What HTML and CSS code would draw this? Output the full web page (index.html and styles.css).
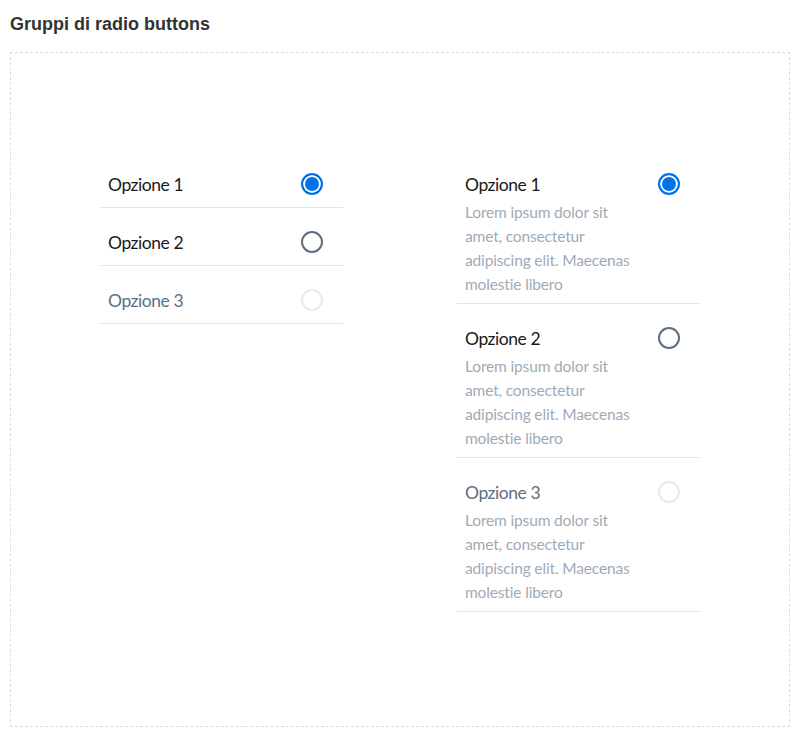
FILE: index.html
```html
<!DOCTYPE html>
<html lang="it">
<head>
<meta charset="utf-8">
<title>Gruppi di radio buttons</title>
<link rel="stylesheet" href="styles.css">
</head>
<body>
<h1 class="heading">Gruppi di radio buttons</h1>
<div class="demo">
  <div class="columns">
    <div class="group">
      <label class="item">
        <span class="title">Opzione 1</span>
        <span class="radio checked"></span>
      </label>
      <label class="item">
        <span class="title">Opzione 2</span>
        <span class="radio"></span>
      </label>
      <label class="item disabled">
        <span class="title">Opzione 3</span>
        <span class="radio"></span>
      </label>
    </div>
    <div class="group with-desc">
      <label class="item">
        <span class="text">
          <span class="title">Opzione 1</span>
          <span class="desc">Lorem ipsum dolor sit amet, consectetur adipiscing elit. Maecenas molestie libero</span>
        </span>
        <span class="radio checked"></span>
      </label>
      <label class="item">
        <span class="text">
          <span class="title">Opzione 2</span>
          <span class="desc">Lorem ipsum dolor sit amet, consectetur adipiscing elit. Maecenas molestie libero</span>
        </span>
        <span class="radio"></span>
      </label>
      <label class="item disabled">
        <span class="text">
          <span class="title">Opzione 3</span>
          <span class="desc">Lorem ipsum dolor sit amet, consectetur adipiscing elit. Maecenas molestie libero</span>
        </span>
        <span class="radio"></span>
      </label>
    </div>
  </div>
</div>
</body>
</html>
```
FILE: styles.css
```css
* { box-sizing: border-box; }
body {
  margin: 0;
  padding: 10px;
  background: #fff;
  font-family: "Lato", "Noto Sans", sans-serif;
}
.heading {
  margin: 3px 0 17px;
  font-family: "Liberation Sans", Arial, sans-serif;
  font-size: 18px;
  font-weight: bold;
  line-height: 22px;
  color: #333;
}
.demo {
  border: 1px dashed #ddd;
  height: 675px;
  padding: 97px 89px 0 89px;
}
.columns {
  display: grid;
  grid-template-columns: 243px 243px;
  justify-content: space-between;
}
.item {
  display: flex;
  justify-content: space-between;
  align-items: flex-start;
  padding: 23px 20px 10px 8px;
  border-bottom: 1px solid #e3e4e6;
}
.with-desc .item {
  padding-bottom: 7px;
}
.text {
  display: flex;
  flex-direction: column;
  width: 180px;
}
.title {
  font-size: 17.5px;
  letter-spacing: -0.45px;
  line-height: 24px;
  color: #1a1a1a;
}
.desc {
  margin-top: 3px;
  font-size: 15.5px;
  letter-spacing: -0.15px;
  line-height: 24px;
  color: #9eabb7;
}
.disabled .title { color: #5c6f82; }
.radio {
  width: 22px;
  height: 22px;
  border-radius: 50%;
  border: 2px solid #5c6f82;
  flex: none;
}
.radio.checked {
  border-color: #0073e6;
  background: #0073e6;
  box-shadow: inset 0 0 0 2px #fff;
}
.disabled .radio {
  border-color: #e6e9f2;
}
```
